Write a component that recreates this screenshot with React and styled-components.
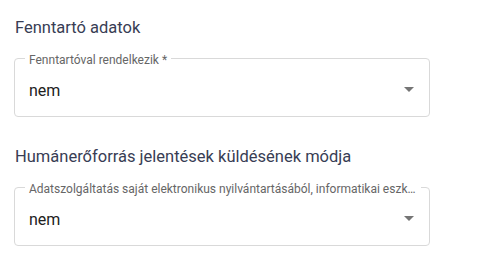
import styled, { createGlobalStyle } from 'styled-components';

const GlobalStyle = createGlobalStyle`
  body {
    margin: 0;
    background: #fff;
    font-family: Roboto, "Liberation Sans", sans-serif;
  }
`;

const sections = [
  {
    title: 'Fenntartó adatok',
    label: 'Fenntartóval rendelkezik *',
    value: 'nem',
  },
  {
    title: 'Humánerőforrás jelentések küldésének módja',
    label:
      'Adatszolgáltatás saját elektronikus nyilvántartásából, informatikai eszközzel',
    value: 'nem',
  },
];

const App = () => {
  return (
    <>
      <GlobalStyle />
      <Page>
        {sections.map(s => (
          <Section key={s.title}>
            <H2>{s.title}</H2>
            <Field>
              <Legend>{s.label}</Legend>
              <Control>
                <Value>{s.value}</Value>
                <Arrow viewBox="0 0 24 24">
                  <path d="M7 10l5 5 5-5z" />
                </Arrow>
              </Control>
            </Field>
          </Section>
        ))}
      </Page>
    </>
  );
};

export default App;

const Page = styled.div`
  display: flex;
  flex-direction: column;
  gap: 28px;
  width: 416px;
  padding: 16px 0 0 14px;
`;

const Section = styled.section`
  display: flex;
  flex-direction: column;
  gap: 9px;
`;

const H2 = styled.h2`
  margin: 0;
  padding-left: 1px;
  font-size: 16.5px;
  font-weight: 400;
  line-height: 24px;
  color: #383d54;
`;

const Field = styled.fieldset`
  box-sizing: border-box;
  height: 68px;
  margin: 0;
  padding: 0 14px 3px;
  border: 1px solid #d9d9d9;
  border-radius: 4px;
  min-width: 0;
`;

const Legend = styled.legend`
  max-width: 388px;
  margin-left: -4px;
  padding: 4px 4px 0;
  overflow: hidden;
  white-space: nowrap;
  text-overflow: ellipsis;
  font-size: 12px;
  line-height: 14px;
  color: #666;
`;

const Control = styled.div`
  display: flex;
  align-items: center;
  height: 46px;
`;

const Value = styled.span`
  flex: 1;
  font-size: 16px;
  color: #212121;
`;

const Arrow = styled.svg`
  width: 24px;
  height: 24px;
  margin: -2px -6px 0 0;
  fill: #757575;
`;
